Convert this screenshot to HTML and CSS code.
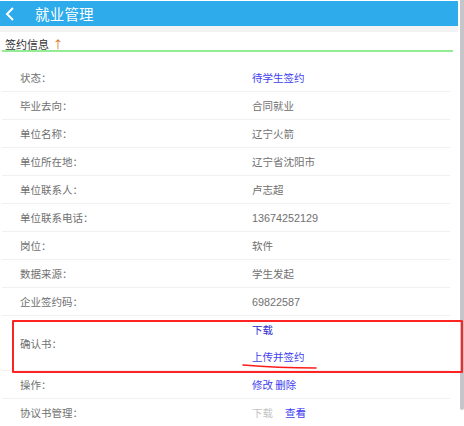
FILE: index.html
```
<!DOCTYPE html>
<html lang="zh">
<head>
<meta charset="utf-8">
<title>就业管理</title>
<link rel="stylesheet" href="styles.css">
</head>
<body>
<div class="screen">
  <div class="main">
    <header class="topbar">
      <svg class="back" width="12" height="16" viewBox="0 0 12 16"><polyline points="9,2 3,8 9,14" fill="none" stroke="#fff" stroke-width="2"/></svg>
      <span class="title">就业管理</span>
    </header>
    <div class="strip"></div>
    <div class="section-title">签约信息 <span class="arrow">↑</span></div>
    <div class="list">
      <div class="row"><span class="label">状态：</span><span class="value link">待学生签约</span></div>
      <div class="row"><span class="label">毕业去向：</span><span class="value">合同就业</span></div>
      <div class="row"><span class="label">单位名称：</span><span class="value">辽宁火箭</span></div>
      <div class="row"><span class="label">单位所在地：</span><span class="value">辽宁省沈阳市</span></div>
      <div class="row"><span class="label">单位联系人：</span><span class="value">卢志超</span></div>
      <div class="row"><span class="label">单位联系电话：</span><span class="value num">13674252129</span></div>
      <div class="row"><span class="label">岗位：</span><span class="value">软件</span></div>
      <div class="row"><span class="label">数据来源：</span><span class="value">学生发起</span></div>
      <div class="row"><span class="label">企业签约码：</span><span class="value num">69822587</span></div>
      <div class="row tall"><span class="label">确认书：</span>
        <div class="value stack"><span class="link dark">下载</span><span class="link">上传并签约</span></div>
      </div>
      <div class="row"><span class="label">操作：</span><span class="value link">修改 删除</span></div>
      <div class="row"><span class="label">协议书管理：</span><span class="value"><span class="muted">下载</span><span class="link view">查看</span></span></div>
    </div>
  </div>
  <div class="scrollbar"></div>
</div>
<div class="redbox"></div>
<svg class="underline" width="80" height="10" viewBox="0 0 80 10"><path d="M1 3 Q 35 6 74 6" fill="none" stroke="#ff1a1a" stroke-width="1.6" stroke-linecap="round"/></svg>
</body>
</html>
```
FILE: styles.css
```
html, body {
  margin: 0;
  padding: 0;
  background: #fff;
  overflow: hidden;
  height: 426px;
}
body {
  font-family: "Noto Sans CJK SC", "Noto Sans", sans-serif;
  position: relative;
}
.screen {
  display: flex;
  width: 464px;
}
.main {
  width: 458px;
  padding-top: 1px;
}
.topbar {
  height: 25px;
  background: #2eabeb;
  display: flex;
  align-items: center;
  color: #fff;
}
.back {
  margin-left: 4px;
}
.title {
  margin-left: 19px;
  font-size: 14.5px;
  line-height: 25px;
  letter-spacing: 0.2px;
}
.strip {
  height: 6px;
  background: #f3f3f3;
}
.section-title {
  margin-left: 2px;
  width: 448px;
  height: 18px;
  border-bottom: 2px solid #94ec94;
  font-size: 11px;
  line-height: 24px;
  color: #333;
  padding-left: 3px;
  box-sizing: content-box;
}
.arrow {
  color: #d07020;
  font-size: 11px;
  margin-left: 1px;
}
.list {
  margin-left: 2px;
  width: 448px;
  padding-top: 12px;
}
.row {
  display: flex;
  align-items: center;
  height: 27px;
  border-bottom: 1px solid #f1f1f1;
  font-size: 10.5px;
  color: #707070;
}
.label {
  width: 232px;
  padding-left: 18px;
  flex-shrink: 0;
}
.value {
  color: #707070;
}
.num {
  font-family: "Liberation Sans", "Noto Sans", sans-serif;
  font-size: 10.8px;
}
.link {
  color: #4040f0;
}
.dark {
  color: #2b2bd0;
}
.tall {
  height: 54px;
}
.stack {
  display: flex;
  flex-direction: column;
}
.stack span {
  line-height: 27px;
}
.muted {
  color: #c4c4c4;
}
.view {
  margin-left: 12px;
}
.scrollbar {
  width: 4px;
  height: 410px;
  margin-left: 2px;
  background: #c6c6ca;
  border-radius: 0 0 2px 2px;
}
.redbox {
  position: absolute;
  left: 12px;
  top: 320px;
  width: 447px;
  height: 49px;
  border: 2px solid #ff2424;
  border-radius: 1px;
}
.underline {
  position: absolute;
  left: 242px;
  top: 362px;
}
```
